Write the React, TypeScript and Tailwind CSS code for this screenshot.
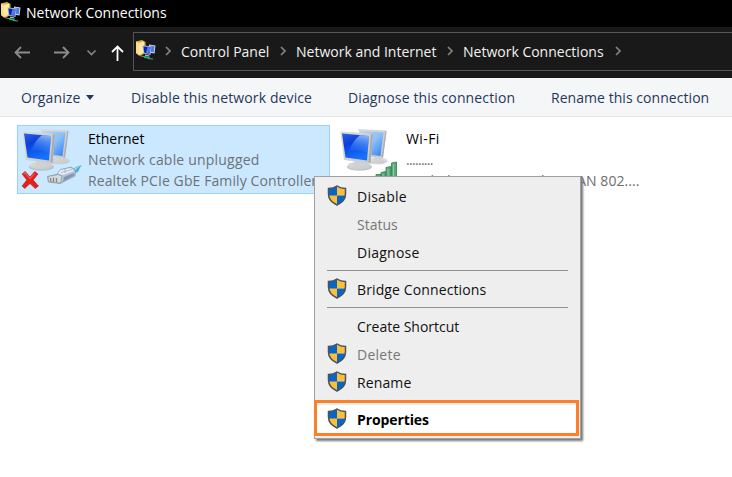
import { clsx } from "clsx";

interface MenuEntry {
  label: string;
  shield?: boolean;
  disabled?: boolean;
  tracking?: string;
}

const menuGroups: MenuEntry[][] = [
  [
    { label: "Disable", shield: true, tracking: "tracking-[0.25px]" },
    { label: "Status", disabled: true },
    { label: "Diagnose", tracking: "tracking-[0.25px]" },
  ],
  [{ label: "Bridge Connections", shield: true, tracking: "tracking-[0.12px]" }],
  [
    { label: "Create Shortcut" },
    { label: "Delete", shield: true, disabled: true, tracking: "tracking-[0.25px]" },
    { label: "Rename", shield: true, tracking: "tracking-[0.12px]" },
  ],
];

function FolderNetworkIcon() {
  return (
    <svg width="21" height="20" viewBox="0 0 21 20" className="block shrink-0">
      <path d="M1 1.500L7 0l3.500 2v11L5 16l-4-3z" fill="#d9b64c" />
      <path d="M1 1.500l3 1.500v12.500L1 13z" fill="#f8df83" />
      <path d="M4 3l5-1.500v11L4 15z" fill="#ffeaa2" />
      <path d="M14 4.500l6.500 1-1 8-5.500-1z" fill="#d2dcea" />
      <path d="M15 5.500l4.500.7-.7 6-4-.5z" fill="#4d79e4" />
      <path d="M7.500 5.500l9 .8-1 8.700-7-1.500z" fill="#9fb2d2" />
      <path d="M8.500 6.500l7 .7-1 6.500-5.200-1z" fill="#0b1fba" />
      <path d="M11 12.500l1.500-5.400 3 .2-.9 6.200z" fill="#4f7cea" />
      <path d="M10 14.500l4 .8 1 1.200-5-.5z" fill="#aab6c2" />
      <path d="M4.500 15.500l6 1.500M13 18.500l5 .5" stroke="#7c8a86" strokeWidth="1.200" fill="none" />
      <path d="M9 16l5.500 1v2l-5.500-1.200z" fill="#25b661" />
    </svg>
  );
}

function ScreensIcon() {
  return (
    <svg width="50" height="44" viewBox="0 0 50 44" className="block">
      <defs>
        <linearGradient id="screen" x1="0" y1="0" x2=".4" y2="1">
          <stop offset="0" stopColor="#2a62dc" />
          <stop offset=".4" stopColor="#0a3fdc" />
          <stop offset="1" stopColor="#1672fa" />
        </linearGradient>
        <linearGradient id="sheen" x1=".7" y1="0" x2=".5" y2="1">
          <stop offset="0" stopColor="#b4dcff" stopOpacity=".75" />
          <stop offset=".9" stopColor="#4e9cff" stopOpacity=".15" />
        </linearGradient>
        <linearGradient id="screenBack" x1="0" y1="0" x2="1" y2="1">
          <stop offset="0" stopColor="#b4d8fb" />
          <stop offset=".5" stopColor="#8cc0f8" />
          <stop offset="1" stopColor="#2b7df2" />
        </linearGradient>
        <linearGradient id="metal" x1="0" y1="0" x2="1" y2="1">
          <stop offset="0" stopColor="#dadbda" />
          <stop offset="1" stopColor="#c6c8ca" />
        </linearGradient>
      </defs>
      <ellipse cx="38" cy="32" rx="10" ry="3.500" fill="#b9bfc4" opacity=".55" />
      <path d="M34 28l7-1 1 4 4 1.500-3 2H31z" fill="url(#metal)" />
      <path d="M18 0l27.500 1.500 1 1L43 29l-15-1z" fill="url(#metal)" />
      <path d="M45.500 1.500l1 1L43 29l-1.500-1z" fill="#adafb0" />
      <path d="M20 2l23.500 1.500-3 23.500-17-2z" fill="url(#screenBack)" />
      <ellipse cx="19.500" cy="38" rx="12.500" ry="3.800" fill="#b2b9bf" opacity=".8" />
      <ellipse cx="19" cy="36.500" rx="11.500" ry="3.800" fill="url(#metal)" />
      <path d="M14 31l10 1-1 5h-9z" fill="#cfd2d4" />
      <path d="M.5 2.500L31 4.500l2 1.500-2.500 28.500L4 31 .5 4z" fill="url(#metal)" />
      <path d="M31 4.500l2 1.500-2.500 28.500-2-1.500z" fill="#aaacab" />
      <path d="M2 4.500L29 7l-2 24.500L5.500 28.500z" fill="url(#screen)" />
      <path d="M20 6.200L29 7l-1.400 17Q18 19 9 22q4-11 11-15.800z" fill="url(#sheen)" />
    </svg>
  );
}

function PlugIcon() {
  return (
    <svg width="36" height="23" viewBox="0 0 36 23" className="block">
      <path d="M24 7l6-4 5.500-2L32 8l-7 2z" fill="#4db3d0" />
      <path d="M27 5.500l8-4.500-6 5z" fill="#a9e4f0" />
      <path
        d="M1.500 12.500l9-2 4-5 11-2.500 4 4-.5 5-15 7.500-11.500-1.500z"
        fill="#b3c2d6"
        stroke="#7f91a3"
        strokeWidth=".7"
      />
      <path d="M2 12.500l10-2 4 1.500-1.500 7-12-1.500z" fill="#d3dae2" stroke="#8797a6" strokeWidth=".7" />
      <path d="M14.500 6l10.500-2 3 3-11 4-5-1.500z" fill="#e6edf5" />
      <path d="M15 8.500l11-3M19 5v4" stroke="#9db0c6" strokeWidth=".8" />
      <path d="M18 13l10-4v2.500l-11 6z" fill="#8295b4" />
      <path d="M4.500 14l.5 3.500M7.500 13.500v4.500M10.500 14v4" stroke="#8f8b58" strokeWidth="1.300" />
    </svg>
  );
}

function RedCross() {
  return (
    <svg width="18" height="18" viewBox="0 0 17 18" preserveAspectRatio="none" className="block">
      <path
        d="M1 3l3-2.500L8.500 6 13 .5 16 3l-4.500 6 5 6-3 2.500-5-5-5 5L1 15l4.500-6z"
        fill="#e3201d"
        stroke="#c41a1c"
        strokeWidth=".6"
      />
      <path d="M2.500 3L4 2l4.500 5.500L13 2.500" stroke="#f5605a" fill="none" />
    </svg>
  );
}

function SignalBars() {
  return (
    <svg width="23" height="23" viewBox="0 0 23 23" className="block">
      <g fill="#5aa978" stroke="#2f8052" strokeWidth=".8">
        <path d="M1 13.500h5V22H1zM6 11.500l4.500-1V22H6zM11 6.500l5-1V22h-5zM16.500 2l5-1v21h-5z" />
      </g>
      <path d="M18.500 3v18M13 8v13M8 13v8" stroke="#8fcaa4" />
    </svg>
  );
}

function Shield() {
  return (
    <svg width="20" height="21" viewBox="0 0 20 21" className="-mt-px block">
      <path d="M10 1Q7 3.500 1.500 3.500V9c0 5.500 3.500 8.500 8.500 11V10.500z" fill="#ffbe36" />
      <path d="M10 1v9.500H1.500V3.500Q7 3.500 10 1z" fill="#0865c8" />
      <path d="M10 1q3 2.500 8.500 2.500v7H10z" fill="#ffbe36" />
      <path d="M10 10.500h8.400C18 15 14.500 18 10 20z" fill="#0865c8" />
      <path
        d="M10 1Q6.500 3.500 1.500 3.500V9c0 5.500 3.500 8.700 8.500 11 5-2.300 8.500-5.500 8.500-11V3.500Q13.500 3.500 10 1z"
        fill="none"
        stroke="#47535f"
        strokeWidth="1.500"
      />
    </svg>
  );
}

function Chevron({ className }: { className?: string }) {
  return (
    <svg width="7" height="10" viewBox="0 0 7 10" className={clsx("block shrink-0", className)}>
      <path d="M1 1l4 4-4 4" fill="none" stroke="#858585" strokeWidth="1.700" />
    </svg>
  );
}

function Arrow({ className }: { className?: string }) {
  return (
    <svg width="17" height="17" viewBox="0 0 17 17" className={clsx("block shrink-0", className)}>
      <path d="M16 8.500H1.500M7 3L1.500 8.500 7 14" fill="none" stroke="currentColor" strokeWidth="1.800" />
    </svg>
  );
}

function MenuRow({ label, shield, disabled, tracking }: MenuEntry) {
  return (
    <li className="flex h-7 items-center pl-3">
      <span className="w-[30px]">{shield && <Shield />}</span>
      <span className={clsx(tracking, disabled ? "text-[#777777]" : "text-[#111111]")}>{label}</span>
    </li>
  );
}

function ContextMenu() {
  return (
    <div className="absolute left-[314px] top-[176px] h-[263px] w-[267px] border border-[#a0a0a0] bg-[#eeeeee] pt-[5px] shadow-[2px_2px_2px_#777777]">
      {menuGroups.map((group) => (
        <ul key={group[0].label}>
          {group.map((entry) => (
            <MenuRow key={entry.label} {...entry} />
          ))}
          <li className="mx-3 h-[9px] pt-1">
            {group[0].label !== "Create Shortcut" && <div className="h-px bg-[#919191]" />}
          </li>
        </ul>
      ))}
      <div className="-ml-px -mt-[5px] flex h-9 w-[265px] items-center border-[3px] border-[#ff7f27] bg-white pl-2.5 pt-0.5 shadow-[inset_0_2px_0_#eeeeee]">
        <span className="w-[30px]">
          <Shield />
        </span>
        <span className="font-bold tracking-[-0.1px] text-black">Properties</span>
      </div>
    </div>
  );
}

export default function App() {
  return (
    <div className="relative h-[477px] w-[732px] overflow-hidden bg-white font-['Open_Sans','Noto_Sans',sans-serif] text-[14px] leading-[21px] whitespace-nowrap">
      {/* Title bar */}
      <header className="flex h-[27px] items-start bg-black text-white">
        <span className="mt-0.5 w-[26px]">
          <FolderNetworkIcon />
        </span>
        <span className="mt-0.5">Network Connections</span>
      </header>

      {/* Address bar */}
      <nav className="flex h-[51px] bg-[#191919] text-[#f1f1f1]">
        <div className="flex w-[133px] items-center pl-3.5">
          <Arrow className="text-[#8b8b8b]" />
          <Arrow className="ml-[22px] rotate-180 text-[#8b8b8b]" />
          <Chevron className="ml-[18px] rotate-90" />
          <Arrow className="ml-[14px] mt-0.5 rotate-90 text-white" />
        </div>
        <div className="mt-[5px] flex h-[39px] flex-1 items-center border border-r-0 border-[#555555] pl-px">
          <div className="-mt-1">
            <FolderNetworkIcon />
          </div>
          <Chevron className="-mt-0.5 ml-[9px]" />
          <span className="ml-[9px] w-[87px]">Control Panel</span>
          <Chevron className="-mt-0.5 ml-3" />
          <span className="ml-[9px] w-[140px]">Network and Internet</span>
          <Chevron className="-mt-0.5 ml-[11px]" />
          <span className="ml-[9px] w-[141px]">Network Connections</span>
          <Chevron className="-mt-0.5 ml-[11px]" />
        </div>
      </nav>

      {/* Command bar */}
      <div className="flex h-[39px] items-center border-b border-[#e4e6e8] bg-[#f5f6f8] pl-[21px] text-[#1e395b]">
        <span className="w-[65px] tracking-[0.12px]">Organize</span>
        <span className="w-[45px]">
          <span className="block h-0 w-0 border-x-[4px] border-t-[5px] border-x-transparent border-t-[#1e395b]" />
        </span>
        <span className="w-[217px] tracking-[0.11px]">Disable this network device</span>
        <span className="w-[203px] tracking-[0.13px]">Diagnose this connection</span>
        <span className="tracking-[0.05px]">Rename this connection</span>
      </div>

      {/* Adapters */}
      <main className="flex pl-[17px] pt-2">
        <section className="relative h-[69px] w-[313px] border border-[#99d1ff] bg-[#cce8ff] pl-[70px] pt-0.5 text-[#6d7277]">
          <div className="absolute left-1 top-[3px]">
            <ScreensIcon />
          </div>
          <div className="absolute left-[3px] top-[45px]">
            <RedCross />
          </div>
          <div className="absolute left-7 top-[38px]">
            <PlugIcon />
          </div>
          <p className="text-black">Ethernet</p>
          <p className="tracking-[0.2px]">Network cable unplugged</p>
          <p className="tracking-[0.1px]">Realtek PCIe GbE Family Controller</p>
        </section>
        <section className="relative ml-[5px] h-[69px] w-[313px] pl-[71px] pt-[3px] text-[#6d6d6d]">
          <div className="absolute left-[5px] top-1">
            <ScreensIcon />
          </div>
          <div className="absolute left-[40px] top-[36px]">
            <SignalBars />
          </div>
          <p className="tracking-[0.4px] text-black">Wi-Fi</p>
          <p className="tracking-[-0.7px]">.........</p>
          <p className="tracking-[0.06px]">Realtek 8822CE Wireless LAN 802....</p>
        </section>
      </main>

      <ContextMenu />
    </div>
  );
}
